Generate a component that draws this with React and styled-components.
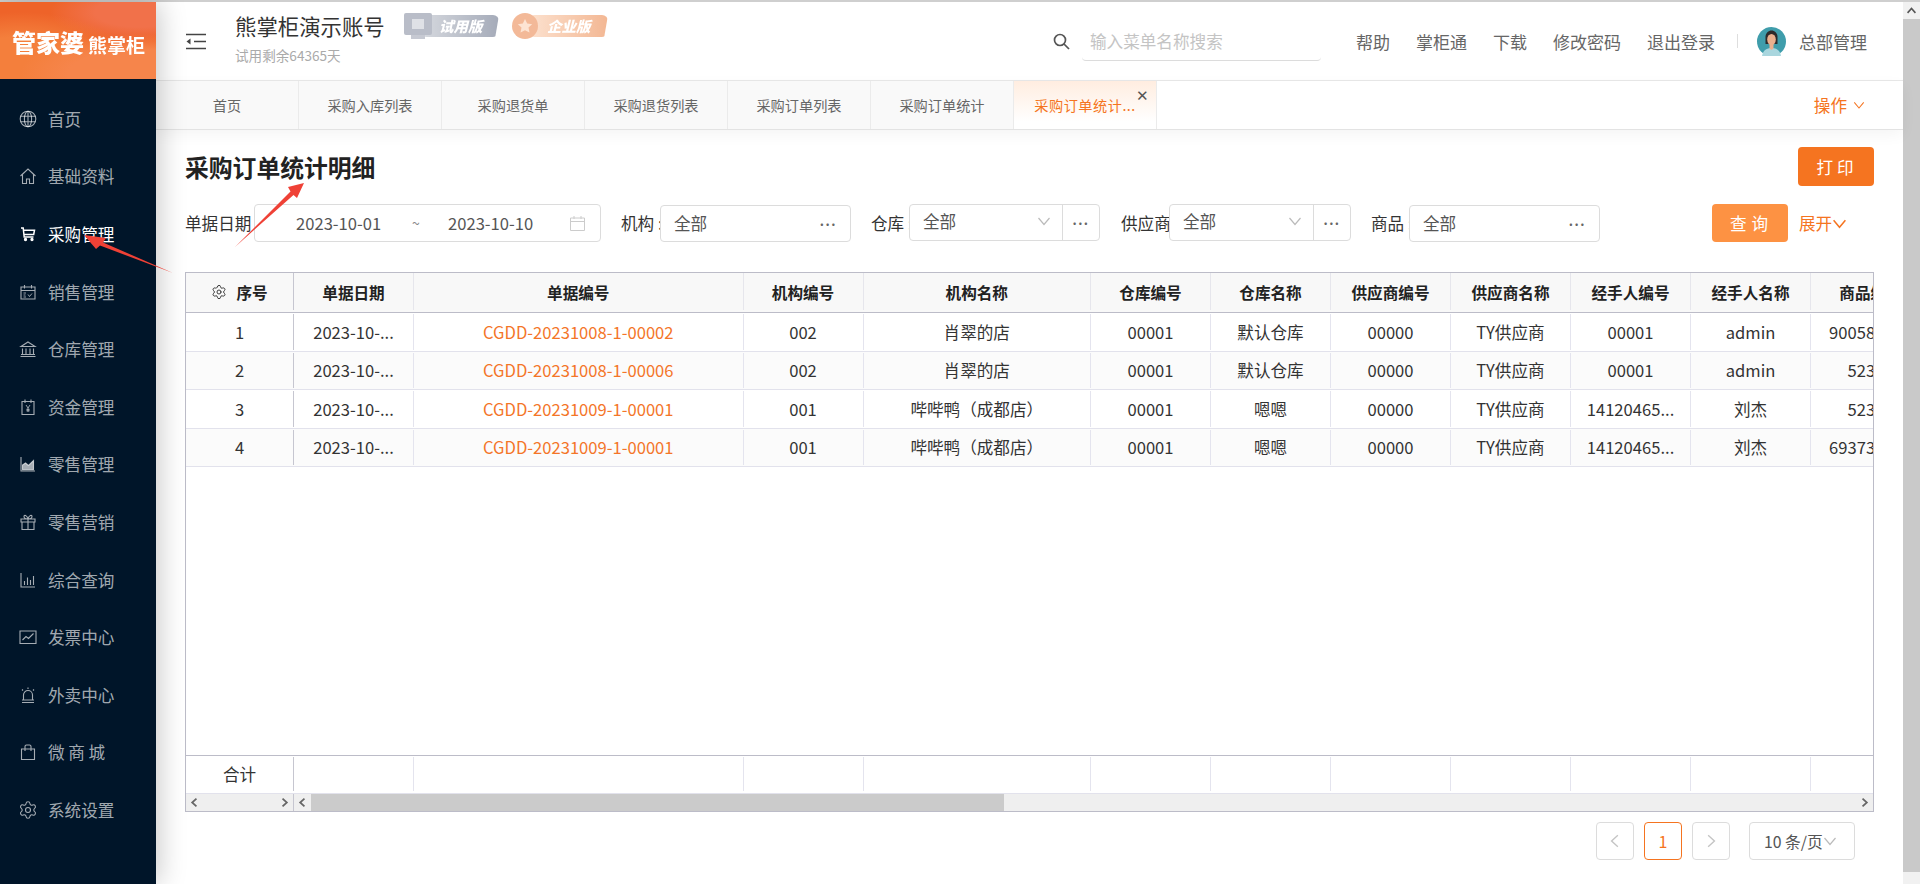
import React from "react";
import styled, { createGlobalStyle } from "styled-components";
import { Settings } from "lucide-react";

const FONT = `"Noto Sans CJK SC", "Noto Sans", "Liberation Sans", sans-serif`;
const ORANGE = "#f57420";

const Global = createGlobalStyle`
  html, body { margin: 0; padding: 0; height: 884px; overflow: hidden; background: #fff; }
  body { font-family: ${FONT}; color: #333; }
  * { box-sizing: border-box; }
`;

const Page = styled.div`
  width: 1920px;
  height: 884px;
  display: flex;
  flex-direction: column;
  position: relative;
  overflow: hidden;
`;
const TopRule = styled.div`
  height: 2px;
  flex: none;
  background: #cfcfcf;
`;
const Shell = styled.div`
  flex: 1;
  display: flex;
  min-height: 0;
`;

/* ---------- sidebar ---------- */
const Sidebar = styled.aside`
  width: 156px;
  flex: none;
  background: #001529;
  position: relative;
  z-index: 2;
  box-shadow: 3px 0 26px rgba(0, 0, 0, 0.22);
`;
const Logo = styled.div`
  height: 77px;
  display: flex;
  align-items: center;
  padding: 2px 0 0 12px;
  color: #fff;
  background:
    radial-gradient(ellipse 120px 40px at 140px 72px, #f6854b 0 60%, transparent 100%),
    radial-gradient(ellipse 110px 50px at 20px 60px, #f47f3c 0 50%, transparent 100%),
    radial-gradient(ellipse 90px 30px at 140px 10px, #f1714a 0 50%, transparent 100%),
    #ee6329;
`;
const LogoMain = styled.span`
  font-size: 24px;
  font-weight: 900;
  line-height: 1;
  filter: blur(0.5px);
`;
const LogoSub = styled.span`
  font-size: 19px;
  font-weight: 700;
  line-height: 1;
  margin-left: 4px;
  margin-top: 5px;
  filter: blur(0.5px);
`;
const NavList = styled.nav`
  padding-top: 11px;
  display: flex;
  flex-direction: column;
`;
const NavItem = styled.div`
  height: 57.6px;
  display: flex;
  align-items: center;
  padding-left: 18px;
  font-size: 16.6px;
  color: ${(p) => (p.$active ? "#fff" : "rgba(255,255,255,0.65)")};
`;
const NavIconBox = styled.svg`
  width: 20px;
  height: 20px;
  flex: none;
  margin-right: 10px;
  fill: none;
  stroke: currentColor;
  stroke-width: 1.1;
`;
const NavGear = styled(Settings)`
  width: 20px;
  height: 20px;
  flex: none;
  margin-right: 10px;
  stroke-width: 1.300;
`;

const navIcons = {
  globe: (
    <>
      <circle cx="10" cy="10" r="7.8" />
      <ellipse cx="10" cy="10" rx="3.6" ry="7.8" />
      <path d="M10 2.2v15.6M2.6 7.2h14.8M2.6 12.8h14.8" />
    </>
  ),
  home: <path d="M2.5 10 10 3l7.500 7M4.500 8.500V17.500h4v-4.500h3v4.500h4V8.500" />,
  cart: (
    <>
      <path d="M3 4h2.200l1 9h9.300M5.500 6.200h11l-.8 4.300H6" strokeWidth="1.500" />
      <circle cx="7.500" cy="15.500" r="1.100" fill="currentColor" />
      <circle cx="14" cy="15.500" r="1.100" fill="currentColor" />
    </>
  ),
  sale: (
    <>
      <path d="M3 5h14v12H3zM3 8.500h14M6.500 3v3.500M13.500 3v3.500" />
      <path d="M5.500 11h2.500M5.500 13h2M5.500 15h2.500M10 12.500l1.500 2 2.500-3" strokeWidth="0.900" />
    </>
  ),
  bank: <path d="M10 3l7 4.500H3zM4.500 9.500v5.500M8 9.500v5.500M12 9.500v5.500M15.500 9.500v5.500M3 15.500h14M2.500 17.500h15" />,
  money: (
    <>
      <path d="M4 4.500h12V17.500H4zM7 2.500v3.500M13 2.500v3.500" />
      <path d="M8 8l2 3 2-3M10 11v4M8.300 12.300h3.400M8.300 13.800h3.400" strokeWidth="0.900" />
    </>
  ),
  area: (
    <>
      <path d="M3 3v14h14" />
      <path d="M4.500 15.800V11l3-2 3 2.500 5-5v9.300z" fill="currentColor" />
    </>
  ),
  gift: <path d="M3 7h14v3H3zM4 10v7.500h12V10M10 7v10.500M10 7C8 7 6 6.500 6 4.500S9 3 10 7c1-4 4-4.500 4-2.500S12 7 10 7z" />,
  bars: <path d="M3 3v14h14M6.500 15v-4M9.500 15V7.500M12.500 15V10M15.500 15V6" />,
  line: <path d="M2 4h16v12.500H2zM4.500 13l3.500-3.500 2.500 2 5-5" />,
  siren: <path d="M5.500 15V10a4.500 4.500 0 0 1 9 0v5M4 15h12M4 17.500h12M10 2.500V4M4 4.500 5 5.500M16 4.500 15 5.500" />,
  bag: <path d="M3.500 7h13v10.500h-13zM7 9V4.500a1.500 1.500 0 0 1 1.500-1.500h3A1.500 1.500 0 0 1 13 4.500V9" />,
};

const navData = [
  ["globe", "首页"],
  ["home", "基础资料"],
  ["cart", "采购管理", true],
  ["sale", "销售管理"],
  ["bank", "仓库管理"],
  ["money", "资金管理"],
  ["area", "零售管理"],
  ["gift", "零售营销"],
  ["bars", "综合查询"],
  ["line", "发票中心"],
  ["siren", "外卖中心"],
  ["bag", "微 商 城"],
  ["gear", "系统设置"],
];

/* ---------- main ---------- */
const Main = styled.main`
  flex: 1;
  min-width: 0;
  display: flex;
  flex-direction: column;
`;
const Header = styled.header`
  height: 79px;
  flex: none;
  border-bottom: 1px solid #e8e8e8;
  display: flex;
  align-items: center;
  padding: 0 36px 0 30px;
`;
const MenuIcon = styled.svg`
  width: 20px;
  height: 17px;
  flex: none;
  margin-right: 29px;
  stroke: #444;
  fill: none;
`;
const Account = styled.div`
  display: flex;
  flex-direction: column;
  width: 177px;
  flex: none;
  margin-top: -8px;
`;
const AccountRow = styled.div`
  display: flex;
  align-items: center;
  align-self: flex-start;
  margin-top: 11px;
`;
const AccountName = styled.div`
  font-size: 21.4px;
  line-height: 30px;
  color: #333;
  white-space: nowrap;
`;
const AccountHint = styled.div`
  font-size: 13.6px;
  line-height: 18px;
  margin-top: 5px;
  color: #aaa;
  white-space: nowrap;
`;
const Badge = styled.div`
  display: flex;
  align-items: center;
  width: ${(p) => p.$w}px;
  margin-left: ${(p) => p.$ml}px;
  height: 26px;
  flex: none;
`;
const BadgeIcon = styled.svg`
  width: 28px;
  height: 26px;
  flex: none;
  position: relative;
  z-index: 1;
  margin-right: -8px;
`;
const BadgePill = styled.div`
  flex: 1;
  height: 22px;
  border-radius: 2px 6px 6px 2px;
  clip-path: polygon(0 0, 100% 0, 95% 100%, 0 100%);
  background: ${(p) => p.$bg};
  color: #fff;
  font-size: 14.5px;
  font-weight: 900;
  font-style: italic;
  line-height: 22px;
  padding-left: 15px;
  white-space: nowrap;
  filter: blur(0.3px);
`;
const Search = styled.div`
  display: flex;
  align-items: center;
  margin-left: 445px;
  flex: none;
`;
const SearchIcon = styled.svg`
  width: 17px;
  height: 17px;
  margin-right: 12px;
  fill: none;
  stroke: #555;
  stroke-width: 1.700;
`;
const SearchField = styled.div`
  width: 239px;
  height: 38px;
  padding: 0 8px;
  margin-top: 2px;
  line-height: 36px;
  border-bottom: 1px solid #dcdcdc;
  border-radius: 0 0 4px 4px;
  font-size: 16.6px;
  color: #c4c4c4;
`;
const TopLinks = styled.div`
  display: flex;
  align-items: center;
  gap: 26px;
  margin-left: auto;
  font-size: 17px;
  color: #666;
  white-space: nowrap;
`;
const VDivider = styled.div`
  width: 1px;
  height: 14px;
  background: #dedede;
  margin: 0 -4px 0 -4px;
`;
const User = styled.div`
  display: flex;
  align-items: center;
  gap: 13px;
  margin-left: -3px;
`;
const Avatar = styled.svg`
  width: 29px;
  height: 29px;
  flex: none;
`;

/* ---------- tabs ---------- */
const Tabs = styled.div`
  height: 49px;
  flex: none;
  display: flex;
  align-items: stretch;
  border-bottom: 1px solid #e3e3e3;
  box-shadow: 0 5px 14px rgba(0, 0, 0, 0.045);
  position: relative;
`;
const Tab = styled.div`
  width: 143px;
  flex: none;
  position: relative;
  display: flex;
  align-items: center;
  justify-content: center;
  font-size: 14.2px;
  letter-spacing: ${(p) => (p.$active ? "0.5px" : "0")};
  border-right: 1px solid #ebebeb;
  color: ${(p) => (p.$active ? ORANGE : "#666")};
  background: ${(p) =>
    p.$active ? "linear-gradient(180deg, #ffede0 0%, #fff 85%)" : "#f9f9f9"};
`;
const TabClose = styled.span`
  position: absolute;
  top: 6px;
  right: 7px;
  font-size: 15px;
  line-height: 15px;
  color: #555;
`;
const TabActions = styled.div`
  margin-left: auto;
  display: flex;
  align-items: center;
  gap: 6px;
  padding-right: 38px;
  font-size: 16.6px;
  color: ${ORANGE};
`;

/* ---------- content ---------- */
const Content = styled.div`
  flex: 1;
  min-height: 0;
  display: flex;
  flex-direction: column;
  padding: 17px 29px 0;
`;
const TitleRow = styled.div`
  display: flex;
  align-items: center;
  justify-content: space-between;
  height: 39px;
  flex: none;
`;
const Title = styled.h1`
  margin: 0;
  font-size: 23.800px;
  font-weight: 700;
  color: #222;
  line-height: 39px;
`;
const PrintBtn = styled.button`
  width: 76px;
  height: 39px;
  border: 0;
  border-radius: 4px;
  background: ${ORANGE};
  color: #fff;
  font: 400 16.6px ${FONT};
  letter-spacing: 4px;
  padding-left: 8px;
`;
const FilterRow = styled.div`
  margin-top: 18px;
  height: 38px;
  flex: none;
  display: flex;
  align-items: center;
`;
const Label = styled.label`
  width: ${(p) => p.$w}px;
  margin-left: ${(p) => p.$ml || 0}px;
  flex: none;
  font-size: 16.6px;
  color: #333;
  white-space: nowrap;
`;
const DateBox = styled.div`
  width: 347px;
  height: 38px;
  flex: none;
  position: relative;
  background: #fff;
  border: 1px solid #dcdcdc;
  border-radius: 4px;
  display: flex;
  align-items: center;
  padding-left: 41px;
  font-size: 16.6px;
  color: #555;
`;
const DateText = styled.span`
  width: 86px;
`;
const Tilde = styled.span`
  width: 66px;
  text-align: center;
  padding-left: 2px;
  color: #888;
  font-size: 14px;
`;
const CalIcon = styled.svg`
  width: 17px;
  height: 17px;
  margin-left: auto;
  margin-right: 14px;
  fill: none;
  stroke: #ccc;
`;
const LookupBox = styled.div`
  width: 191px;
  height: 37px;
  flex: none;
  position: relative;
  background: #fff;
  border: 1px solid #dcdcdc;
  border-radius: 4px;
  display: flex;
  align-items: center;
  justify-content: space-between;
  padding: 0 13px;
  font-size: 16.6px;
  color: #555;
`;
const Dots = styled.span`
  font-size: 13px;
  letter-spacing: 1.500px;
  color: #666;
  line-height: 1;
  padding-bottom: 6px;
  font-weight: 700;
`;
const SelectBox = styled.div`
  width: ${(p) => p.$w}px;
  height: 37px;
  flex: none;
  position: relative;
  background: #fff;
  border: 1px solid #dcdcdc;
  border-radius: 4px;
  display: flex;
  align-items: stretch;
  font-size: 16.6px;
  color: #555;
  margin-top: -2px;
`;
const SelectMain = styled.div`
  flex: 1;
  display: flex;
  align-items: center;
  justify-content: space-between;
  padding: 0 11px 2px 13px;
`;
const SelectDots = styled.div`
  width: 37px;
  flex: none;
  border-left: 1px solid #dcdcdc;
  display: flex;
  align-items: center;
  justify-content: center;
`;
const Chevron = styled.svg`
  width: ${(p) => p.$s || 14}px;
  height: ${(p) => p.$s || 14}px;
  fill: none;
  stroke: ${(p) => p.$c || "#bbb"};
  stroke-width: ${(p) => p.$sw || 1.2};
  flex: none;
`;
const QueryBtn = styled.button`
  width: 76px;
  height: 38px;
  margin-left: auto;
  flex: none;
  border: 0;
  border-radius: 4px;
  background: #fd9243;
  color: #fff;
  font: 400 16.6px ${FONT};
  letter-spacing: 5px;
  padding-left: 9px;
`;
const Expand = styled.div`
  width: 50px;
  margin-left: 11px;
  margin-right: 25px;
  flex: none;
  display: flex;
  align-items: center;
  font-size: 16.6px;
  color: ${ORANGE};
  white-space: nowrap;
`;

/* ---------- table ---------- */
const COLS = "108px 120px 329.500px 120px 227.500px repeat(7, 120px)";
const TableFrame = styled.div`
  margin-top: 30px;
  height: 540px;
  flex: none;
  border: 1px solid #bcbcc8;
  display: flex;
  flex-direction: column;
  overflow: hidden;
`;
const Row = styled.div`
  display: grid;
  grid-template-columns: ${COLS};
  height: ${(p) => p.$h}px;
  flex: none;
  background: ${(p) => p.$bg || "#fff"};
  border-bottom: 1px solid ${(p) => p.$line || "#e2e2ec"};
`;
const HeadCell = styled.div`
  display: flex;
  align-items: center;
  justify-content: center;
  white-space: nowrap;
  overflow: hidden;
  font-size: 15.600px;
  font-weight: 700;
  color: #222;
  margin: 0 0 2px;
  border-right: 1px solid ${(p) => (p.$fixed ? "#c6c6d0" : "#e6e6ec")};
`;
const Cell = styled.div`
  display: flex;
  align-items: center;
  justify-content: center;
  white-space: nowrap;
  overflow: hidden;
  font-size: 16.600px;
  color: ${(p) => (p.$link ? "#f47528" : "#333")};
  margin: 1px 0;
  border-right: 1px solid ${(p) => (p.$fixed ? "#c6c6d0" : "#e4e4ee")};
`;
const HeadGear = styled(Settings)`
  width: 16px;
  height: 16px;
  margin-right: 9px;
  color: #333;
  stroke-width: 1.400;
`;
const TableBody = styled.div`
  flex: 1;
  min-height: 0;
  background: #fff;
  border-bottom: 1px solid #bcbcc8;
`;
const ScrollRow = styled.div`
  height: 18px;
  flex: none;
  display: flex;
  background: #efefef;
  border-top: 1px solid #e2e2ec;
`;
const ScrollFixed = styled.div`
  width: 108px;
  flex: none;
  border-right: 1px solid #c6c6d0;
  display: flex;
  align-items: center;
  justify-content: space-between;
`;
const ScrollTrack = styled.div`
  flex: 1;
  min-width: 0;
  display: flex;
  align-items: center;
`;
const ScrollThumb = styled.div`
  width: 693px;
  height: 100%;
  flex: none;
  background: #cbcbcb;
`;
const ArrowBtn = styled.div`
  width: 17px;
  height: 100%;
  flex: none;
  display: flex;
  align-items: center;
  justify-content: center;
  margin-left: ${(p) => (p.$end ? "auto" : "0")};
`;

const Pager = styled.div`
  display: flex;
  align-items: center;
  justify-content: flex-end;
  gap: 10px;
  margin-top: 10px;
  padding-right: 19px;
  flex: none;
`;
const PageBtn = styled.div`
  width: 38px;
  height: 38px;
  border: 1px solid ${(p) => (p.$active ? ORANGE : "#dcdcdc")};
  border-radius: 4px;
  display: flex;
  align-items: center;
  justify-content: center;
  font-size: 16px;
  color: ${ORANGE};
`;
const SizeSelect = styled.div`
  width: 106px;
  height: 38px;
  margin-left: 9px;
  border: 1px solid #dcdcdc;
  border-radius: 4px;
  display: flex;
  align-items: center;
  padding-left: 14px;
  font-size: 15.800px;
  color: #555;
  white-space: nowrap;
`;

/* ---------- page scrollbar ---------- */
const PageBar = styled.div`
  width: 17px;
  flex: none;
  display: flex;
  flex-direction: column;
  background: #f1f1f1;
`;
const PageBarBtn = styled.div`
  height: 17px;
  flex: none;
  display: flex;
  align-items: center;
  justify-content: center;
`;
const PageBarThumb = styled.div`
  height: 853px;
  flex: none;
  background: #c9c9c9;
`;

/* ---------- annotations ---------- */
const Annotation = styled.svg`
  position: absolute;
  left: 0;
  top: 0;
  width: 1920px;
  height: 884px;
  z-index: 5;
  pointer-events: none;
`;

const ChevronDown = ({ s, c, sw }) => (
  <Chevron viewBox="0 0 14 14" $s={s} $c={c} $sw={sw}>
    <path d="M1.500 4 7 10.500 12.500 4" />
  </Chevron>
);
const ChevronSide = ({ dir, s, c, sw }) => (
  <Chevron viewBox="0 0 14 14" $s={s} $c={c} $sw={sw}>
    <path d={dir === "left" ? "M9.500 2 4 7l5.500 5" : "M4.500 2 10 7l-5.500 5"} />
  </Chevron>
);

const heads = [
  "单据日期", "单据编号", "机构编号", "机构名称", "仓库编号", "仓库名称",
  "供应商编号", "供应商名称", "经手人编号", "经手人名称", "商品编号",
];
const rows = [
  ["2023-10-...", "CGDD-20231008-1-00002", "002", "肖翠的店", "00001", "默认仓库", "00000", "TY供应商", "00001", "admin", "900588888"],
  ["2023-10-...", "CGDD-20231008-1-00006", "002", "肖翠的店", "00001", "默认仓库", "00000", "TY供应商", "00001", "admin", "52301"],
  ["2023-10-...", "CGDD-20231009-1-00001", "001", "哔哔鸭（成都店）", "00001", "嗯嗯", "00000", "TY供应商", "14120465...", "刘杰", "52301"],
  ["2023-10-...", "CGDD-20231009-1-00001", "001", "哔哔鸭（成都店）", "00001", "嗯嗯", "00000", "TY供应商", "14120465...", "刘杰", "693737373"],
];
const tabs = ["首页", "采购入库列表", "采购退货单", "采购退货列表", "采购订单列表", "采购订单统计"];

export default function App() {
  return (
    <Page>
      <Global />
      <TopRule />
      <Shell>
        <Sidebar>
          <Logo>
            <LogoMain>管家婆</LogoMain>
            <LogoSub>熊掌柜</LogoSub>
          </Logo>
          <NavList>
            {navData.map(([icon, label, active]) => (
              <NavItem key={label} $active={active}>
                {icon === "gear" ? (
                  <NavGear />
                ) : (
                  <NavIconBox viewBox="0 0 20 20">{navIcons[icon]}</NavIconBox>
                )}
                {label}
              </NavItem>
            ))}
          </NavList>
        </Sidebar>
        <Main>
          <Header>
            <MenuIcon viewBox="0 0 20 17">
              <path d="M0 1.500h20M8 8.500h12M0 15.500h20" strokeWidth="1.500" />
              <path d="M4.500 5.500 0.500 8.500 4.500 11.500z" fill="#444" stroke="none" />
            </MenuIcon>
            <Account>
              <AccountName>熊掌柜演示账号</AccountName>
              <AccountHint>试用剩余64365天</AccountHint>
            </Account>
            <AccountRow>
              <Badge $w={95} $ml={-8}>
                <BadgeIcon viewBox="0 0 28 26">
                  <path d="M2 0h24a2 2 0 0 1 2 2v18a2 2 0 0 1-2 2H2a2 2 0 0 1-2-2V2a2 2 0 0 1 2-2z" fill="#b9bdc8" />
                  <rect x="7" y="22" width="14" height="4" fill="#c6c9d2" />
                  <rect x="8" y="6" width="12" height="10" fill="#dfe1e6" />
                </BadgeIcon>
                <BadgePill $bg="linear-gradient(90deg,#d4d7dd,#a5abb9)">试用版</BadgePill>
              </Badge>
              <Badge $w={96} $ml={13}>
                <BadgeIcon viewBox="0 0 28 26">
                  <circle cx="13" cy="13" r="13" fill="#f3b998" />
                  <path d="M13 6l2.200 4.600 5 .6-3.700 3.400 1 5L13 17.200 8.500 19.600l1-5L5.800 11.200l5-.6z" fill="#fde4d3" />
                </BadgeIcon>
                <BadgePill $bg="linear-gradient(90deg,#fce0cd,#f3b793)">企业版</BadgePill>
              </Badge>
            </AccountRow>
            <Search>
              <SearchIcon viewBox="0 0 17 17">
                <circle cx="7" cy="7" r="5.500" />
                <path d="M11 11l5 5" />
              </SearchIcon>
              <SearchField>输入菜单名称搜索</SearchField>
            </Search>
            <TopLinks>
              <span>帮助</span>
              <span>掌柜通</span>
              <span>下载</span>
              <span>修改密码</span>
              <span>退出登录</span>
              <VDivider />
              <User>
                <Avatar viewBox="0 0 29 29">
                  <circle cx="14.500" cy="14.500" r="14.500" fill="#3f9dab" />
                  <path d="M5 29c1-6 5-8 9.500-8s8.500 2 9.500 8z" fill="#a9d6de" />
                  <path d="M8.500 17V10c0-4 3-6.500 6-6.500s6 2.500 6 6.500v7z" fill="#2d2a2a" />
                  <ellipse cx="14.500" cy="12.500" rx="4.300" ry="5.500" fill="#eab08e" />
                  <path d="M12.500 17h4v4.500l-2 1.500-2-1.500z" fill="#eab08e" />
                </Avatar>
                <span>总部管理</span>
              </User>
            </TopLinks>
          </Header>
          <Tabs>
            {tabs.map((t) => (
              <Tab key={t}>{t}</Tab>
            ))}
            <Tab $active>
              采购订单统计...
              <TabClose>✕</TabClose>
            </Tab>
            <TabActions>
              操作
              <ChevronDown s={12} c={ORANGE} sw={1.200} />
            </TabActions>
          </Tabs>
          <Content>
            <TitleRow>
              <Title>采购订单统计明细</Title>
              <PrintBtn>打印</PrintBtn>
            </TitleRow>
            <FilterRow>
              <Label $w={69}>单据日期 :</Label>
              <DateBox>
                <DateText>2023-10-01</DateText>
                <Tilde>~</Tilde>
                <DateText>2023-10-10</DateText>
                <CalIcon viewBox="0 0 17 17">
                  <path d="M1.500 3h14v12.500h-14zM1.500 6.500h14M5 1v3M12 1v3" />
                </CalIcon>
              </DateBox>
              <Label $w={39} $ml={20}>机构 :</Label>
              <LookupBox>
                全部
                <Dots>...</Dots>
              </LookupBox>
              <Label $w={38} $ml={20}>仓库 :</Label>
              <SelectBox $w={191}>
                <SelectMain>
                  全部
                  <ChevronDown s={14} />
                </SelectMain>
                <SelectDots>
                  <Dots>...</Dots>
                </SelectDots>
              </SelectBox>
              <Label $w={48} $ml={21}>供应商 :</Label>
              <SelectBox $w={182}>
                <SelectMain>
                  全部
                  <ChevronDown s={14} />
                </SelectMain>
                <SelectDots>
                  <Dots>...</Dots>
                </SelectDots>
              </SelectBox>
              <Label $w={38} $ml={20}>商品 :</Label>
              <LookupBox>
                全部
                <Dots>...</Dots>
              </LookupBox>
              <QueryBtn>查询</QueryBtn>
              <Expand>
                展开
                <ChevronDown s={15} c={ORANGE} sw={1.400} />
              </Expand>
            </FilterRow>
            <TableFrame>
              <Row $h={40} $bg="#f8f8f8" $line="#bcbcc8">
                <HeadCell $fixed>
                  <HeadGear />
                  序号
                </HeadCell>
                {heads.map((h) => (
                  <HeadCell key={h}>{h}</HeadCell>
                ))}
              </Row>
              {rows.map((r, i) => (
                <Row key={i} $h={38.500} $bg={i % 2 ? "#fbfbfb" : "#fff"}>
                  <Cell $fixed>{i + 1}</Cell>
                  {r.map((v, j) => (
                    <Cell key={j} $link={j === 1}>{v}</Cell>
                  ))}
                </Row>
              ))}
              <TableBody />
              <Row $h={37} $line="transparent">
                <Cell $fixed>合计</Cell>
                {heads.map((h) => (
                  <Cell key={h} />
                ))}
              </Row>
              <ScrollRow>
                <ScrollFixed>
                  <ArrowBtn><ChevronSide dir="left" s={11} c="#666" sw={2.200} /></ArrowBtn>
                  <ArrowBtn><ChevronSide dir="right" s={11} c="#666" sw={2.200} /></ArrowBtn>
                </ScrollFixed>
                <ScrollTrack>
                  <ArrowBtn><ChevronSide dir="left" s={11} c="#666" sw={2.200} /></ArrowBtn>
                  <ScrollThumb />
                  <ArrowBtn $end><ChevronSide dir="right" s={11} c="#666" sw={2.200} /></ArrowBtn>
                </ScrollTrack>
              </ScrollRow>
            </TableFrame>
            <Pager>
              <PageBtn><ChevronSide dir="left" s={16} c="#c4c4c4" /></PageBtn>
              <PageBtn $active>1</PageBtn>
              <PageBtn><ChevronSide dir="right" s={16} c="#c4c4c4" /></PageBtn>
              <SizeSelect>
                10 条/页
                <ChevronDown s={14} />
              </SizeSelect>
            </Pager>
          </Content>
        </Main>
        <PageBar>
          <PageBarBtn><Chevron viewBox="0 0 14 14" $s={11} $c="#555" $sw={2}><path d="M2 10 7 4.500 12 10" /></Chevron></PageBarBtn>
          <PageBarThumb />
        </PageBar>
      </Shell>
      <Annotation viewBox="0 0 1920 884">
        <polygon points="304,183 297,198 293.500,195 235,247 290.500,191.500 288,187" fill="#ef4136" />
        <polygon points="84,235 106,238 103,242.500 173,273 100,245.500 96,249" fill="#ef4136" />
      </Annotation>
    </Page>
  );
}
